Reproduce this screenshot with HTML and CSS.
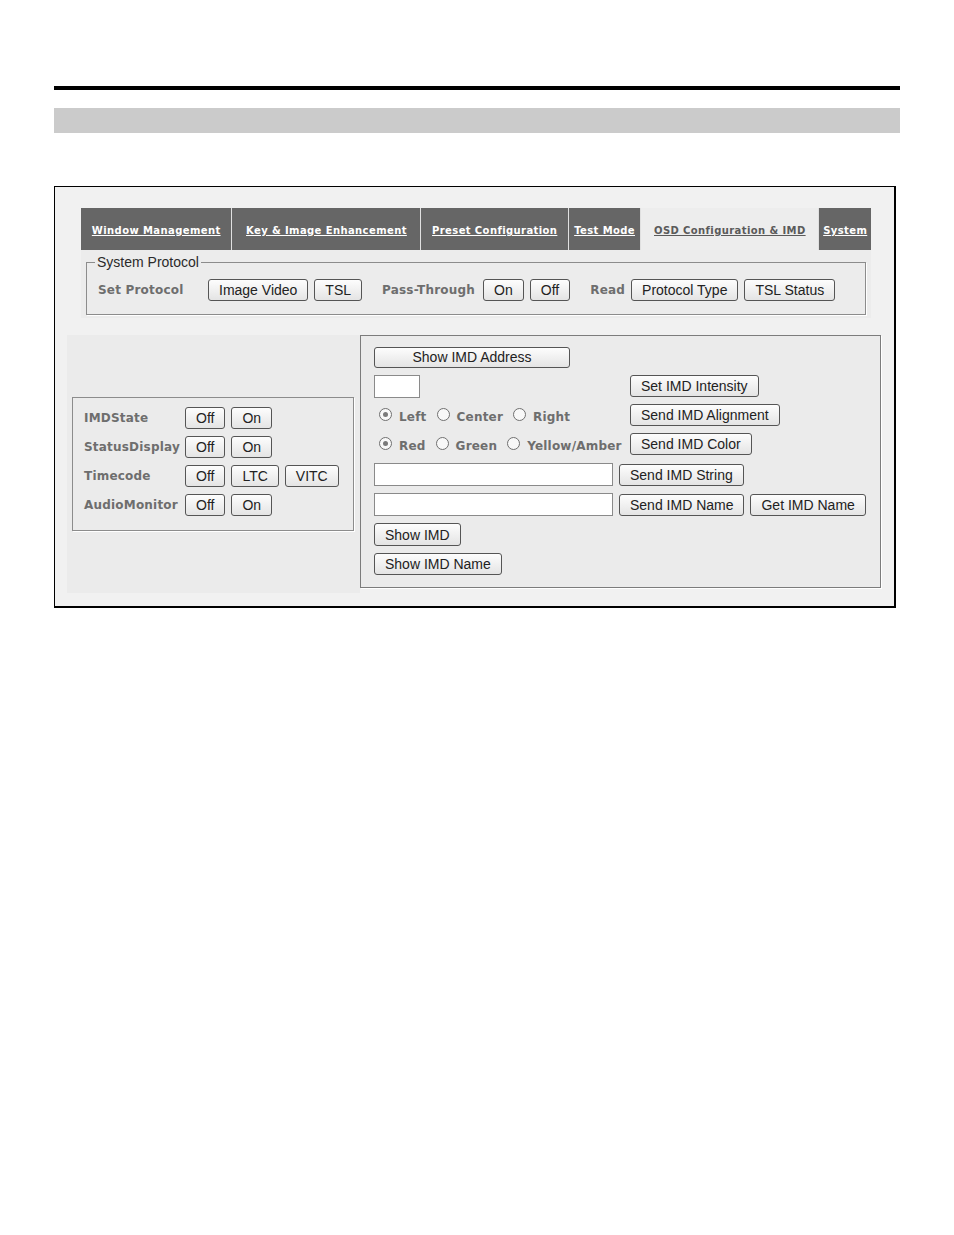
FILE: index.html
```html
<!DOCTYPE html>
<html>
<head>
<meta charset="utf-8">
<title>OSD Configuration &amp; IMD</title>
<link rel="stylesheet" href="styles.css">
</head>
<body>
<div class="page">
  <div class="rule"></div>
  <div class="band"></div>
  <div class="frame">
    <div class="tabs">
      <div class="tab"><a href="#">Window Management</a></div>
      <div class="tab"><a href="#">Key &amp; Image Enhancement</a></div>
      <div class="tab"><a href="#">Preset Configuration</a></div>
      <div class="tab"><a href="#">Test Mode</a></div>
      <div class="tab active"><a href="#">OSD Configuration &amp; IMD</a></div>
      <div class="tab"><a href="#">System</a></div>
    </div>
    <div class="pane">
      <fieldset class="proto">
        <legend>System Protocol</legend>
        <div class="proto-row">
          <span class="lbl set-lbl">Set Protocol</span>
          <button class="btn">Image Video</button>
          <button class="btn">TSL</button>
          <span class="lbl mid-lbl">Pass-Through</span>
          <button class="btn">On</button>
          <button class="btn wide-gap">Off</button>
          <span class="lbl read-lbl">Read</span>
          <button class="btn">Protocol Type</button>
          <button class="btn">TSL Status</button>
        </div>
      </fieldset>
    </div>
    <div class="lower">
      <div class="left-panel">
        <div class="state-box">
          <div class="state-row">
            <span class="lbl state-lbl">IMDState</span>
            <button class="btn">Off</button>
            <button class="btn">On</button>
          </div>
          <div class="state-row">
            <span class="lbl state-lbl">StatusDisplay</span>
            <button class="btn">Off</button>
            <button class="btn">On</button>
          </div>
          <div class="state-row">
            <span class="lbl state-lbl">Timecode</span>
            <button class="btn">Off</button>
            <button class="btn">LTC</button>
            <button class="btn">VITC</button>
          </div>
          <div class="state-row">
            <span class="lbl state-lbl">AudioMonitor</span>
            <button class="btn">Off</button>
            <button class="btn">On</button>
          </div>
        </div>
      </div>
      <div class="right-panel">
        <div class="rp-row"><button class="btn addr-btn">Show IMD Address</button></div>
        <div class="opt-grid">
          <div class="cell"><input class="txt small-txt" type="text"></div>
          <div class="cell"><button class="btn">Set IMD Intensity</button></div>
          <div class="cell radios">
            <span class="radio checked"></span><span class="lbl rlbl">Left</span>
            <span class="radio"></span><span class="lbl rlbl">Center</span>
            <span class="radio"></span><span class="lbl rlbl">Right</span>
          </div>
          <div class="cell"><button class="btn">Send IMD Alignment</button></div>
          <div class="cell radios">
            <span class="radio checked"></span><span class="lbl rlbl">Red</span>
            <span class="radio"></span><span class="lbl rlbl">Green</span>
            <span class="radio"></span><span class="lbl rlbl">Yellow/Amber</span>
          </div>
          <div class="cell"><button class="btn">Send IMD Color</button></div>
        </div>
        <div class="rp-row str-row">
          <input class="txt long-txt" type="text">
          <button class="btn">Send IMD String</button>
        </div>
        <div class="rp-row str-row">
          <input class="txt long-txt" type="text">
          <button class="btn">Send IMD Name</button>
          <button class="btn">Get IMD Name</button>
        </div>
        <div class="rp-row"><button class="btn tall">Show IMD</button></div>
        <div class="rp-row"><button class="btn">Show IMD Name</button></div>
      </div>
    </div>
  </div>
</div>
</body>
</html>
```
FILE: styles.css
```css
html, body {
  margin: 0;
  padding: 0;
  background: #ffffff;
}

body {
  font-family: "Liberation Sans", Arial, sans-serif;
  color: #222;
}

.page {
  margin-left: 54px;
  width: 846px;
  padding-top: 86px;
}

.rule {
  height: 4px;
  background: #000;
}

.band {
  height: 25px;
  margin-top: 18px;
  background: #cbcbcb;
}

.frame {
  margin-top: 53px;
  width: 839px;
  border: 1px solid #000;
  border-right-width: 2px;
  border-bottom-width: 2px;
  background: #f1f1f1;
  padding: 21px 0 13px 0;
}

/* tabs */
.tabs {
  display: table;
  table-layout: auto;
  width: 790px;
  height: 42px;
  margin-left: 26px;
  background: #666666;
  border-collapse: collapse;
}

.tab {
  display: table-cell;
  vertical-align: middle;
  text-align: center;
  white-space: nowrap;
  padding: 0;
  border-left: 1px solid #e0e0e0;
}

.tab:first-child {
  border-left: none;
}

.tab a {
  font-family: "DejaVu Sans", Verdana, sans-serif;
  font-weight: bold;
  font-size: 10px;
  letter-spacing: 0.4px;
  color: #ffffff;
  text-decoration: underline;
}

.tab.active {
  background: #ededed;
}

.tab.active a {
  color: #5a5a5a;
}

/* protocol pane */
.pane {
  margin-left: 26px;
  width: 780px;
  padding: 4px 5px 3px 5px;
  background: #ececec;
}

.proto {
  margin: 0;
  padding: 0 10px 13px 8px;
  min-width: 0;
  border: 1px solid #8c8c8c;
  box-shadow: 1px 1px 0 #ffffff;
}

.proto legend {
  padding: 0 2px;
  font-size: 14px;
  line-height: 16px;
  color: #2a2a2a;
}

.proto-row {
  display: flex;
  align-items: center;
  margin-top: 9px;
  padding-left: 3px;
  gap: 6px;
}

.lbl {
  font-family: "DejaVu Sans", Verdana, sans-serif;
  font-weight: bold;
  font-size: 12px;
  letter-spacing: 0.2px;
  color: #6e6e6e;
  white-space: nowrap;
}

.set-lbl {
  width: 104px;
}

.mid-lbl {
  margin-left: 14px;
  margin-right: 2px;
}

.read-lbl {
  margin-left: 14px;
}

.wide-gap {
  margin-left: 2px;
}

/* buttons */
.btn {
  box-sizing: border-box;
  height: 22px;
  margin: 0;
  padding: 0 10px;
  border: 1px solid #555555;
  border-radius: 3px;
  background: linear-gradient(#fdfdfd, #e4e4e4);
  font-family: "Liberation Sans", Arial, sans-serif;
  font-size: 14px;
  line-height: 20px;
  color: #222222;
  white-space: nowrap;
}

.btn.tall {
  height: 23px;
}

.addr-btn {
  width: 196px;
  height: 21px;
  line-height: 19px;
}

/* lower area */
.lower {
  display: flex;
  align-items: flex-start;
  margin: 17px 0 0 12px;
}

.left-panel {
  box-sizing: border-box;
  width: 293px;
  height: 258px;
  padding: 0 5px;
  background: #ebebeb;
  display: flex;
  align-items: center;
}

.state-box {
  box-sizing: border-box;
  width: 282px;
  height: 134px;
  padding: 9px 0 0 11px;
  border: 1px solid #8c8c8c;
  box-shadow: 1px 1px 0 #ffffff;
  display: flex;
  flex-direction: column;
  gap: 7px;
}

.state-row {
  display: flex;
  align-items: center;
  gap: 6px;
}

.state-lbl {
  flex: none;
  width: 95px;
}

.right-panel {
  box-sizing: border-box;
  width: 521px;
  padding: 11px 12px 12px 13px;
  background: #ebebeb;
  border: 1px solid #7c7c7c;
  box-shadow: 1px 1px 0 #ffffff;
  display: flex;
  flex-direction: column;
  gap: 7px;
}

.rp-row {
  display: flex;
  align-items: center;
  gap: 6px;
}

.rp-row .btn {
  flex: none;
}

.opt-grid {
  display: grid;
  grid-template-columns: 256px auto;
  grid-auto-rows: 22px;
  row-gap: 7px;
  margin-bottom: 1px;
}

.opt-grid .cell {
  display: flex;
  align-items: center;
  justify-content: flex-start;
}

.txt {
  box-sizing: border-box;
  height: 23px;
  margin: 0;
  padding: 0 3px;
  border: 1px solid #8a8a8a;
  background: #ffffff;
}

.small-txt {
  width: 46px;
}

.long-txt {
  width: 239px;
}

.radios {
  padding-left: 5px;
  padding-top: 3px;
}

.radio {
  box-sizing: border-box;
  flex: none;
  width: 13px;
  height: 13px;
  margin-right: 7px;
  margin-top: -4px;
  border: 1px solid #707070;
  border-radius: 50%;
  background: #f8f8f8;
  position: relative;
}

.radio.checked::after {
  content: "";
  position: absolute;
  left: 3px;
  top: 3px;
  width: 5px;
  height: 5px;
  border-radius: 50%;
  background: #7a7a7a;
}

.rlbl {
  margin-right: 10px;
}

.str-row {
  gap: 6px;
}
```
